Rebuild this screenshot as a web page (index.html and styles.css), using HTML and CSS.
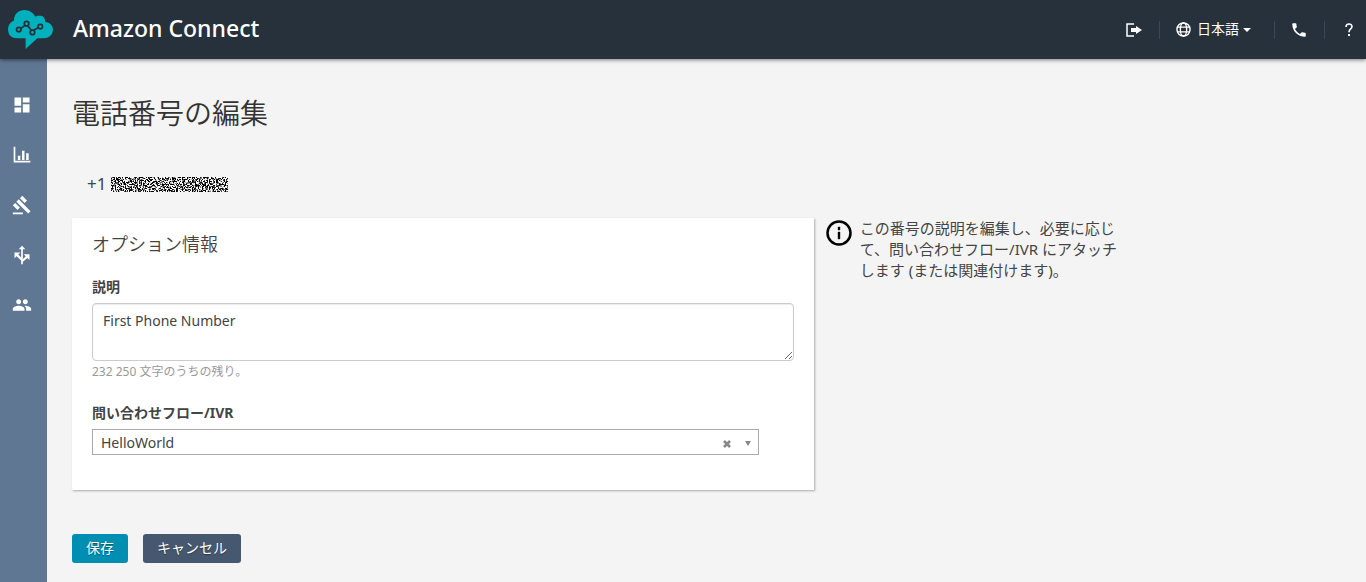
FILE: index.html
```html
<!DOCTYPE html>
<html lang="ja">
<head>
    <meta charset="UTF-8">
    <meta name="viewport" content="width=device-width, initial-scale=1.0">
    <title>Amazon Connect</title>
    <link rel="stylesheet" href="styles.css">
</head>
<body>
    <header class="header">
        <a href="#" class="brand">
            <svg class="logo" viewBox="0 0 46 42" aria-hidden="true">
                <path fill="#00b0bd" d="M9 30C3 30 0 26 0 21c0-5 3-8 6-9C6 5 11 1 17 1c5 0 9 3 11 7 1-1 3-1 4-1 4 0 6 2 6 6 5 1 8 4 8 8 0 5-4 9-9 9h-7L18 41V30z"/>
                <g fill="none" stroke="#27313b" stroke-width="1.8">
                    <path d="M13 20l4-3M20 17l4 5M26 22l5-3"/>
                    <circle cx="11" cy="21" r="2.3"/>
                    <circle cx="19" cy="15" r="2.3"/>
                    <circle cx="25" cy="24" r="2.3"/>
                    <circle cx="33" cy="18" r="2.3"/>
                </g>
            </svg>
            <span>Amazon Connect</span>
        </a>
        <nav class="tools">
            <button type="button" class="tool logout" aria-label="ログアウト">
                <svg width="18" height="14" viewBox="0 0 18 14">
                    <path fill="none" stroke="#fff" stroke-width="1.5" d="M9 1H2v12h7"/>
                    <path fill="#fff" d="M6 5h5V3l6 4-6 4V9H6z"/>
                </svg>
            </button>
            <button type="button" class="tool language">
                <svg width="15" height="15" viewBox="0 0 16 16" fill="none" stroke="#fff" stroke-width="1.5" aria-hidden="true">
                    <circle cx="8" cy="8" r="7"/>
                    <ellipse cx="8" cy="8" rx="3.4" ry="7"/>
                    <path d="M1.5 5.5h13M1.5 10.5h13"/>
                </svg>
                <span>日本語</span>
                <svg width="8" height="4" viewBox="0 0 8 4" aria-hidden="true"><path fill="#fff" d="M0 0h8L4 4z"/></svg>
            </button>
            <button type="button" class="tool phone" aria-label="電話">
                <svg width="18" height="18" viewBox="0 0 24 24"><path fill="#fff" d="M6.62 10.79c1.44 2.83 3.76 5.14 6.59 6.59l2.2-2.2c.27-.27.67-.36 1.02-.24 1.12.37 2.33.57 3.57.57.55 0 1 .45 1 1V20c0 .55-.45 1-1 1C10.61 21 3 13.39 3 4c0-.55.45-1 1-1h3.5c.55 0 1 .45 1 1 0 1.25.2 2.45.57 3.57.11.35.03.74-.25 1.02z"/></svg>
            </button>
            <button type="button" class="tool help" aria-label="ヘルプ">
                <svg width="8" height="13" viewBox="0 0 8 13"><path fill="none" stroke="#fff" stroke-width="1.6" d="M1 4c0-4 6-4 6-.5C7 6 4 6 4 9.200"/><path fill="#fff" d="M3 11h2v2H3z"/></svg>
            </button>
        </nav>
    </header>
    <div class="layout">
        <nav class="sidebar">
            <a href="#" aria-label="ダッシュボード"><svg viewBox="0 0 24 24"><path d="M3 13h8V3H3v10zm0 8h8v-6H3v6zm10 0h8V11h-8v10zm0-18v6h8V3h-8z"/></svg></a>
            <a href="#" aria-label="メトリクス"><svg viewBox="0 0 24 24"><path d="M2 2h2v17h18v2H2zM7 13h3v5H7zM12 7h3v11h-3zM17 10h3v8h-3z"/></svg></a>
            <a href="#" aria-label="ルーティング"><svg viewBox="0 0 24 24"><path d="M1 21h12v2H1zM5.24 8.070l2.830-2.830 14.140 14.140-2.830 2.830zM12.320 1l5.660 5.660-2.830 2.830-5.660-5.660zM3.830 9.480l5.660 5.660-2.830 2.830L1 12.310z"/></svg></a>
            <a href="#" aria-label="問い合わせフロー"><svg viewBox="0 0 24 24"><path d="M12 1L8 5h3v10L7.500 11.500 10 9H3v7l2.500-2.500L11 18.500V23h2v-3l5.500-4.500L21 18v-7h-7l2.500 2.500L13 17V5h3z"/></svg></a>
            <a href="#" aria-label="ユーザー"><svg viewBox="0 0 24 24"><path d="M16 11c1.660 0 2.990-1.340 2.990-3S17.660 5 16 5s-3 1.340-3 3 1.340 3 3 3zm-8 0c1.660 0 2.990-1.340 2.990-3S9.660 5 8 5 5 6.340 5 8s1.340 3 3 3zm0 2c-2.330 0-7 1.170-7 3.500V19h14v-2.500c0-2.330-4.670-3.500-7-3.500zm8 0c-.29 0-.62.020-.97.050 1.160.84 1.970 1.970 1.970 3.450V19h6v-2.500c0-2.330-4.670-3.500-7-3.500z"/></svg></a>
        </nav>
        <main>
            <h1>電話番号の編集</h1>
            <p class="number">
                <span>+1</span>
                <svg class="mask" role="img" aria-label="非表示の電話番号">
                    <filter id="noise" x="0" y="0" width="100%" height="100%" color-interpolation-filters="sRGB">
                        <feTurbulence type="fractalNoise" baseFrequency="0.7" numOctaves="2" seed="4"/>
                        <feColorMatrix values="8 0 0 0 -3.500  8 0 0 0 -3.500  8 0 0 0 -3.500  0 0 0 0 1"/>
                    </filter>
                    <rect width="100%" height="100%" filter="url(#noise)"/>
                </svg>
            </p>
            <form>
                <div class="columns">
                    <section class="card">
                        <h2>オプション情報</h2>
                        <label for="description">説明</label>
                        <textarea id="description" maxlength="250">First Phone Number</textarea>
                        <p class="remaining">232 250 文字のうちの残り。</p>
                        <label for="flow">問い合わせフロー/IVR</label>
                        <div class="select-box">
                            <select id="flow">
                                <option>HelloWorld</option>
                            </select>
                            <div class="select-icons">
                                <button type="button" class="clear" aria-label="クリア">
                                    <svg width="8" height="8" viewBox="0 0 8 8"><path stroke="#888" stroke-width="2.6" d="M1 1l6 6M7 1L1 7"/></svg>
                                </button>
                                <svg width="6" height="5" viewBox="0 0 6 5" aria-hidden="true"><path fill="#888" d="M0 0h6L3 5z"/></svg>
                            </div>
                        </div>
                    </section>
                    <aside class="info">
                        <svg width="26" height="26" viewBox="0 0 26 26" aria-hidden="true">
                            <circle cx="13" cy="13" r="11.500" fill="none" stroke="#000" stroke-width="2.500"/>
                            <path d="M12 7h2v3h-2zM12 12h2v7h-2z" stroke="#000" stroke-width=".4"/>
                        </svg>
                        <p>この番号の説明を編集し、必要に応じて、問い合わせフロー/IVR にアタッチします (または関連付けます)。</p>
                    </aside>
                </div>
                <div class="actions">
                    <button type="submit" class="button save">保存</button>
                    <button type="button" class="button cancel">キャンセル</button>
                </div>
            </form>
        </main>
    </div>
</body>
</html>
```
FILE: styles.css
```css
* {
    box-sizing: border-box;
}

body {
    margin: 0;
    min-height: 100vh;
    display: flex;
    flex-direction: column;
    background-color: #f4f4f4;
    color: #444;
    font-family: 'Noto Sans', 'Noto Sans CJK JP', sans-serif;
    font-size: 14px;
}

h1, h2, p {
    margin: 0;
    font-weight: 400;
}

button, select, textarea {
    font: inherit;
    color: inherit;
}

.header {
    height: 59px;
    display: flex;
    justify-content: space-between;
    align-items: center;
    background-color: #27313b;
    box-shadow: 0 1px 4px rgba(0, 0, 0, 0.5);
    z-index: 1;
}

.brand {
    display: flex;
    align-items: center;
    gap: 20px;
    padding-left: 8px;
    color: #fff;
    font-size: 23px;
    font-weight: 500;
    text-decoration: none;
}

.brand span {
    padding-bottom: 3px;
}

.logo {
    width: 45px;
    height: 41px;
}

.tools {
    display: flex;
}

.tool {
    height: 18px;
    padding: 0;
    display: flex;
    align-items: center;
    justify-content: center;
    background: none;
    border: none;
    border-left: 1px solid #3a4855;
    color: #fff;
    cursor: pointer;
}

.logout {
    width: 50px;
    border-left: none;
}

.language {
    width: 115px;
    gap: 6px;
    padding-right: 7px;
}

.language span {
    margin-right: -2px;
    padding-bottom: 4px;
}

.phone {
    width: 50px;
    padding-right: 2px;
}

.help {
    width: 42px;
    padding-left: 6px;
}

.layout {
    flex: 1;
    display: flex;
}

.sidebar {
    width: 47px;
    padding: 21px 4px 0 0;
    flex-shrink: 0;
    background-color: #607793;
}

.sidebar a {
    height: 50px;
    display: flex;
    align-items: center;
    justify-content: center;
}

.sidebar svg {
    width: 20px;
    height: 20px;
    fill: #fff;
}

main {
    flex: 1;
    padding: 34px 15px 19px 25px;
}

h1 {
    font-size: 28px;
    font-weight: 350;
    line-height: 40px;
    color: #333;
}

.number {
    display: flex;
    align-items: center;
    gap: 5px;
    padding-left: 15px;
    margin: 39px 0 22px;
    font-size: 17px;
    line-height: 24px;
}

.mask {
    width: 117px;
    height: 15px;
}

.columns {
    display: flex;
    align-items: flex-start;
    gap: 12px;
}

.card {
    width: 58%;
    padding: 13px 20px 35px;
    background-color: #fff;
    box-shadow: 1px 1px 2px rgba(0, 0, 0, 0.3);
}

h2 {
    font-size: 18px;
    font-weight: 350;
    line-height: 26px;
    margin-bottom: 20px;
}

label {
    display: block;
    line-height: 20px;
    margin-bottom: 6px;
    font-size: 14px;
    font-weight: 700;
}

#description {
    display: block;
    width: 100%;
    height: 58px;
    padding: 7px 10px;
    line-height: 20px;
    border: 1px solid #ccc;
    border-radius: 4px;
    box-shadow: inset 0 1px 1px rgba(0, 0, 0, 0.08);
}

.remaining {
    padding-top: 1px;
    margin-bottom: 21px;
    color: #999;
    font-size: 12px;
    line-height: 20px;
}

.select-box {
    position: relative;
    width: 95%;
}

select {
    display: block;
    width: 100%;
    height: 26px;
    padding: 0 50px 0 8px;
    appearance: none;
    background-color: #fff;
    border: 1px solid #aaa;
    border-radius: 0;
}

.select-icons {
    position: absolute;
    top: 1px;
    right: 8px;
    height: 26px;
    display: flex;
    align-items: center;
    gap: 14px;
}

.clear {
    display: flex;
    padding: 2px 0 0;
    background: none;
    border: none;
}

.info {
    display: flex;
    gap: 8px;
    font-size: 15px;
    font-weight: 350;
    line-height: 21px;
}

.info svg {
    flex-shrink: 0;
    margin-top: 2px;
}

.info p {
    max-width: 262px;
}

.actions {
    display: flex;
    gap: 15px;
    margin-top: 44px;
}

.button {
    height: 29px;
    padding: 0 14px 2px;
    border: none;
    border-radius: 3px;
    color: #fff;
    line-height: 27px;
    text-shadow: 0 1px 1px rgba(0, 0, 0, 0.4);
    cursor: pointer;
}

.save {
    background-color: #008fb2;
}

.cancel {
    background-color: #46586f;
}
```
